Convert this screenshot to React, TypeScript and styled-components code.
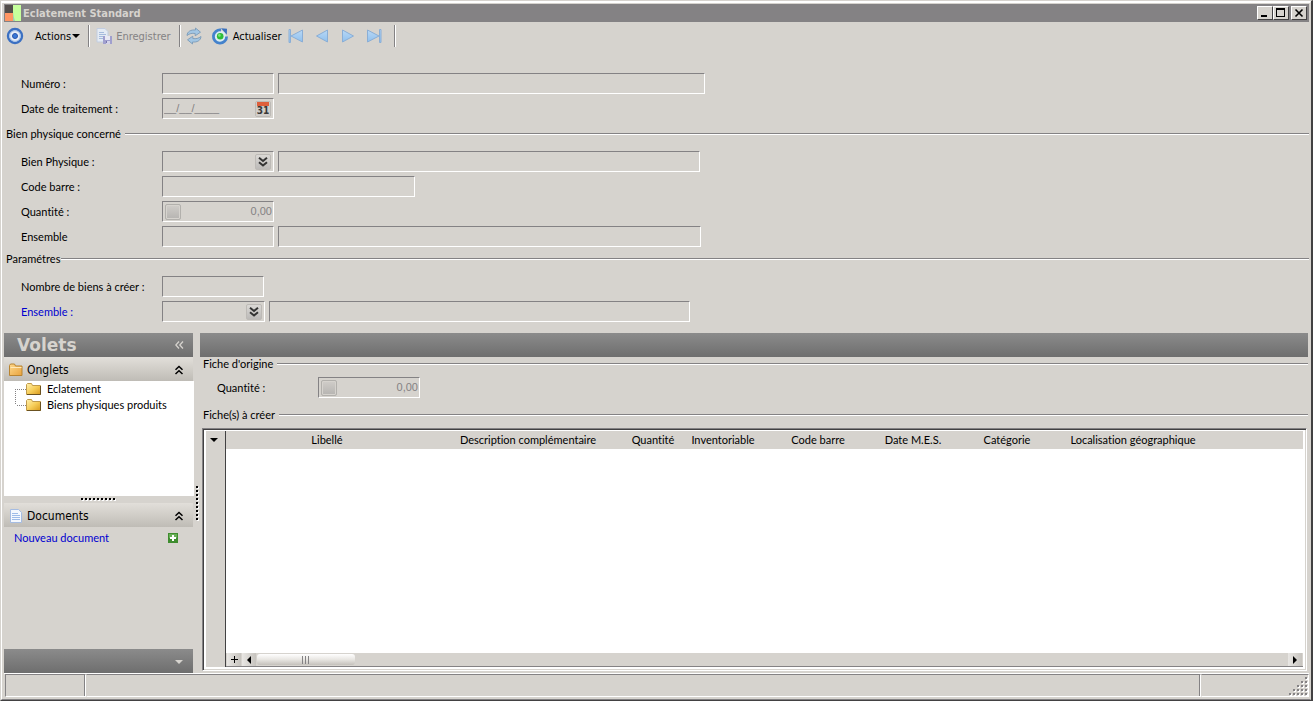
import React from "react";
import styled, { createGlobalStyle, css } from "styled-components";

const face = "#d6d3ce";
const shade = "#848284";
const dark = "#424142";

const GlobalStyle = createGlobalStyle`
  * { box-sizing: border-box; }
  html, body { margin: 0; padding: 0; }
  body, button, input, table {
    font-family: Lato, "Liberation Sans", Arial, sans-serif;
    font-size: 11px;
    font-variant-ligatures: none;
    line-height: 14px;
    color: #000;
  }
  button { margin: 0; padding: 0; border: 0; background: none; }
  a { text-decoration: none; color: #0000d0; }
  svg { display: block; flex: none; }
`;

const Frame = styled.div`
  min-height: 100vh;
  display: flex;
  background: ${face};
  border: 1px solid ${face};
  border-right: 2px solid ${dark};
  border-bottom: 1px solid ${dark};
`;

const Window = styled.div`
  flex: 1;
  min-width: 0;
  display: flex;
  flex-direction: column;
  border: 1px solid #fff;
  border-right-color: ${face};
  border-bottom-color: ${shade};
  border-top-width: 2px;
  padding: 1px 1px 1px 2px;
`;

const TitleBar = styled.header`
  display: flex;
  align-items: center;
  height: 18px;
  padding-right: 2px;
  background: ${shade};
`;

const Title = styled.h1`
  flex: 1;
  margin: 0 0 0 2px;
  padding-top: 1px;
  font: bold 11px/17px "DejaVu Sans Condensed", "DejaVu Sans", sans-serif;
  color: ${face};
`;

const CaptionButton = styled.button<{ $gap?: boolean }>`
  width: 16px;
  height: 14px;
  margin-left: ${(p) => (p.$gap ? 2 : 0)}px;
  display: grid;
  place-items: center;
  background: ${face};
  border: 1px solid;
  border-color: #fff ${dark} ${dark} #fff;
`;

const ToolBar = styled.nav`
  display: flex;
  align-items: center;
  height: 28px;
  padding-left: 2px;
`;

const ToolButton = styled.button<{ $left?: number; $gap?: number }>`
  display: flex;
  align-items: center;
  gap: ${(p) => p.$gap ?? 4}px;
  height: 22px;
  margin-left: ${(p) => p.$left ?? 0}px;
  font-family: "DejaVu Sans Condensed", "DejaVu Sans", sans-serif;
  font-size: 11px;
  &:disabled { color: ${shade}; }
`;

const ToolText = styled.span`
  padding-top: 2px;
`;

const ToolSeparator = styled.span<{ $left: number; $right?: number }>`
  width: 2px;
  height: 22px;
  margin: 0 ${(p) => p.$right ?? 0}px 0 ${(p) => p.$left}px;
  background: linear-gradient(90deg, ${shade} 50%, #fff 50%);
`;

const Form = styled.form`
  padding: 21px 0 9px;
`;

const Rows = styled.div<{ $space?: number }>`
  padding: 0 17px ${(p) => p.$space ?? 0}px;
`;

const Row = styled.div`
  display: flex;
  align-items: center;
  gap: 4px;
  height: 25px;
`;

const Label = styled.label<{ $width?: number }>`
  width: ${(p) => p.$width ?? 137}px;
  flex: none;
  white-space: nowrap;
`;

const BlueLabel = styled(Label)`
  color: #0000d0;
`;

const GroupTitle = styled.h2<{ $left?: number; $gap?: number; $space?: number }>`
  display: flex;
  align-items: center;
  gap: ${(p) => p.$gap ?? 4}px;
  height: 20px;
  margin: 0 0 ${(p) => p.$space ?? 0}px;
  padding-left: ${(p) => p.$left ?? 2}px;
  font-size: 11px;
  font-weight: normal;
  white-space: nowrap;
  &::after {
    content: "";
    flex: 1;
    height: 2px;
    background: linear-gradient(${shade} 50%, #fff 50%);
  }
`;

const sunken = css`
  border: 1px solid;
  border-color: ${shade} #fff #fff ${shade};
  background: ${face};
`;

const Field = styled.span<{ $width: number }>`
  ${sunken}
  display: flex;
  align-items: center;
  width: ${(p) => p.$width}px;
  height: 21px;
  flex: 0 1 auto;
`;

const Input = styled.input<{ $right?: boolean }>`
  flex: 1;
  min-width: 0;
  height: 19px;
  padding: 0 1px 2px;
  border: 0;
  outline: 0;
  background: transparent;
  color: ${shade};
  font-family: "Liberation Sans", Arial, sans-serif;
  text-align: ${(p) => (p.$right ? "right" : "left")};
`;

const FieldButton = styled.button<{ $lead?: boolean }>`
  display: grid;
  place-items: center;
  width: 16px;
  height: 16px;
  margin: ${(p) => (p.$lead ? "0 0 0 2px" : "0 2px 0 0")};
  border: 1px solid ${(p) => (p.$lead ? "#b2b0ac" : "#bdbab6")};
  border-radius: 2px;
  background: ${(p) => (p.$lead ? "linear-gradient(#d0cdc9, #b6b4b1)" : "linear-gradient(#dad8d5, #bcbab8)")};
  box-shadow: ${(p) => (p.$lead ? `inset 0 0 0 1px ${face}` : "none")};
`;

const Main = styled.main`
  flex: 1;
  display: grid;
  grid-template-columns: 190px 5px minmax(0, 1fr);
  padding-right: 1px;
`;

const bar = css`
  height: 24px;
  background: linear-gradient(#8b8b8b, #6e6e6e);
`;

const Side = styled.aside`
  display: flex;
  flex-direction: column;
`;

const SideHead = styled.div`
  ${bar}
  display: flex;
  align-items: center;
  justify-content: space-between;
  margin-right: 1px;
  padding: 0 9px 0 13px;
`;

const SideTitle = styled.h2`
  margin: 0;
  font: bold 17px/24px "DejaVu Sans", Verdana, sans-serif;
  color: ${face};
`;

const SectionHead = styled.button`
  display: flex;
  align-items: center;
  gap: 3px;
  height: 24px;
  margin-right: 1px;
  padding: 1px 9px 0 4px;
  background: linear-gradient(#e2dfda, #bfbcb6);
  font-family: "DejaVu Sans Condensed", "DejaVu Sans", sans-serif;
  font-size: 12px;
`;

const SectionName = styled.span`
  flex: 1;
  text-align: left;
`;

const Tree = styled.ul`
  height: 115px;
  margin: 0;
  padding: 0 0 0 11px;
  list-style: none;
  background: #fff;
`;

const TreeItem = styled.li<{ $last?: boolean }>`
  display: flex;
  align-items: center;
  gap: 5px;
  height: 16px;
  background:
    linear-gradient(#fff, #fff) 0 ${(p) => (p.$last ? 8 : -8)}px / 1px 16px no-repeat,
    repeating-linear-gradient(#848284 0 1px, #fff 1px 2px) 0 0 / 1px 16px no-repeat,
    repeating-linear-gradient(90deg, #848284 0 1px, #fff 1px 2px) 0 8px / 11px 1px no-repeat;
  padding-left: 11px;
`;

const TreeLink = styled.a`
  color: #000;
`;

const HorizontalGrip = styled.div`
  height: 7px;
  display: grid;
  place-items: center;
`;

const DocumentRow = styled.div`
  display: flex;
  justify-content: space-between;
  align-items: center;
  height: 22px;
  padding: 0 16px 0 10px;
`;

const SideFoot = styled.div`
  ${bar}
  display: flex;
  justify-content: flex-end;
  align-items: center;
  margin: auto 1px 0 0;
  padding: 2px 10px 0 0;
`;

const Splitter = styled.div`
  padding: 153px 0 0 2px;
`;

const Content = styled.section`
  display: flex;
  flex-direction: column;
  padding-left: 1px;
`;

const ContentBar = styled.div`
  ${bar}
`;

const QuantityRow = styled(Row)`
  height: 27px;
  padding-left: 17px;
  margin-bottom: 4px;
`;

const ContentGroup = styled.div`
  margin-top: -3px;
`;

const GridFrame = styled.div`
  flex: 1;
  display: flex;
  margin: 3px 1px 2px 2px;
  border: 1px solid;
  border-color: ${shade} #fff #fff ${shade};
  background: #fff;
  box-shadow: inset 1px 1px 0 ${dark}, inset -1px -1px 0 ${face};
  padding: 2px 3px 3px 3px;
`;

const MarkerColumn = styled.div`
  width: 20px;
  flex: none;
  background: ${face};
  border-right: 1px solid ${dark};
`;

const MarkerButton = styled.button`
  display: grid;
  place-items: center;
  width: 16px;
  height: 18px;
`;

const GridBody = styled.div`
  flex: 1;
  min-width: 0;
  display: flex;
  flex-direction: column;
  justify-content: space-between;
`;

const Table = styled.table`
  width: 100%;
  table-layout: fixed;
  border-collapse: collapse;
`;

const Th = styled.th<{ $width?: number }>`
  width: ${(p) => (p.$width ? p.$width + "px" : "auto")};
  height: 18px;
  padding: 0;
  background: ${face};
  font-weight: normal;
  white-space: nowrap;
`;

const ScrollBar = styled.div`
  display: flex;
  align-items: center;
  height: 14px;
  padding-left: 1px;
  background: ${face};
  border-bottom: 1px solid ${shade};
`;

const ScrollButton = styled.button`
  display: grid;
  place-items: center;
  width: 14px;
  height: 13px;
  margin-right: 1px;
  background: linear-gradient(90deg, #e9e7e4, #c6c3be);
`;

const Thumb = styled.div`
  display: grid;
  place-items: center;
  width: 98px;
  height: 11px;
  margin-right: auto;
  border-radius: 3px;
  background: linear-gradient(#fff, #e8e6e2 50%, #c4c1bb);
`;

const StatusBar = styled.footer`
  display: flex;
  height: 24px;
  margin-bottom: 1px;
  border-top: 1px solid #fff;
`;

const StatusCell = styled.div<{ $width?: number }>`
  ${sunken}
  flex: ${(p) => (p.$width ? `0 0 ${p.$width}px` : "1")};
  display: flex;
  align-items: flex-end;
  justify-content: flex-end;
  margin-left: 1px;
  & + & { margin-left: 0; border-left-color: ${face}; }
  &:not(:last-child) { box-shadow: inset -1px 0 0 ${shade}; }
`;

const AppLogo = () => (
  <svg width="17" height="16" viewBox="0 0 17 16">
    <path fill="#524d4a" d="M1 0h8v9H1z" />
    <path fill="#ff9563" d="M1 8h8v8H1z" />
    <path fill="#c6ff9c" d="M9 0h8v16H9z" />
    <path fill="#9ccfb5" d="M9 7q.5 5 2 9H9z" />
  </svg>
);

const TargetIcon = () => (
  <svg width="18" height="18" viewBox="0 0 18 18">
    <circle cx="9" cy="9" r="7" fill="#e7eef7" stroke="#3b70c2" strokeWidth="2.400" />
    <circle cx="9" cy="9" r="5.300" fill="none" stroke="#a9c3e8" />
    <circle cx="9" cy="9" r="2.500" fill="#3979d6" stroke="#2955ad" />
  </svg>
);

const SaveIcon = () => (
  <svg width="16" height="16" viewBox="0 0 16 16">
    <path d="M1 .5h8l3 3V14H1z" fill="#e4ebf4" stroke="#c2cde0" />
    <path d="M3 4.500h5M3 6.500h7M3 8.500h7M3 10.500h4" stroke="#a5bbdd" />
    <path d="M7 8h9v8H7z" fill="#a09fce" />
    <path d="M9 8h5v4H9z" fill="#e8e8f3" />
    <path d="M10 13h4v3h-4z" fill="#d4d3e8" />
    <path d="M10 13h1v2h-1z" fill="#7776ad" />
  </svg>
);

const SyncIcon = () => (
  <svg width="18" height="18" viewBox="0 0 18 18">
    <g fill="#a2c6e4" stroke="#7c9bb8" strokeWidth=".9" strokeLinejoin="round">
      <path d="M2 8.500C2.200 4.500 6 2.500 10.500 3V1l5 4.200-5.300 3.600V6.500C7 6 4.500 6.500 2 8.500z" />
      <path d="M16 9.500c-.2 4-4 6-8.500 5.500v2l-5-4.200 5.300-3.600v2.300c3.200.5 5.700 0 8.200-2z" />
    </g>
  </svg>
);

const RefreshIcon = () => (
  <svg width="18" height="18" viewBox="0 0 18 18">
    <circle cx="9" cy="9.500" r="6" fill="#dcecf0" />
    <path d="M10 3A6.600 6.600 0 1 0 15.600 9.500" fill="none" stroke="#4482cc" strokeWidth="2.800" />
    <path d="M10 1.200l6 .6-.2 6z" fill="#3970bd" />
    <circle cx="9.200" cy="9.300" r="3.300" fill="#2dbd37" />
    <circle cx="8.400" cy="8.400" r="1.300" fill="#80e27e" />
  </svg>
);

const NavIcon = ({ flip, bar }: { flip?: boolean; bar?: boolean }) => (
  <svg width="16" height="16" viewBox="0 0 16 16">
    <defs>
      <linearGradient id="nav" x1="0" y1="0" x2="0" y2="1">
        <stop offset="0" stopColor="#b9d8f5" />
        <stop offset="1" stopColor="#8fc0ee" />
      </linearGradient>
    </defs>
    <g transform={flip ? "matrix(-1 0 0 1 16 0)" : undefined} fill="url(#nav)" stroke="#8aaed6">
      <path d={bar ? "M1.500 2v12L13 8z" : "M2.500 2v12L13.500 8z"} />
      {bar && <path d="M13.500 1.500h1.500v13h-1.500z" />}
    </g>
  </svg>
);

const CaretDown = ({ color = "#000" }: { color?: string }) => (
  <svg width="8" height="4" viewBox="0 0 8 4">
    <path d="M0 0h8L4 4z" fill={color} />
  </svg>
);

const DoubleChevron = ({ up }: { up?: boolean }) => (
  <svg width="10" height="10" viewBox="0 0 10 10">
    <path
      d={up ? "M1.500 4.800L5 1.500l3.500 3.300M1.500 9L5 5.700 8.500 9" : "M1 .8l4 3.200L9 .8M1 5.300l4 3.200 4-3.200"}
      fill="none"
      stroke={up ? "#000" : "#333"}
      strokeWidth={up ? 1.500 : 2}
    />
  </svg>
);

const CollapseIcon = () => (
  <svg width="9" height="8" viewBox="0 0 9 8">
    <path d="M4 .5L.8 4 4 7.500M8 .5L4.800 4 8 7.500" fill="none" stroke={face} strokeWidth="1.300" />
  </svg>
);

const CalendarIcon = () => (
  <svg width="14" height="14" viewBox="0 0 14 14">
    <path d="M0 0h14v14H0z" fill="#d0cdc9" />
    <path d="M1 0h12v4H1z" fill="#de5f3c" />
    <text x="7" y="12" textAnchor="middle" fontFamily="DejaVu Sans Condensed, sans-serif" fontWeight="bold" fontSize="10" fill="#393839">31</text>
  </svg>
);

const FolderIcon = () => (
  <svg width="16" height="14" viewBox="0 0 16 14">
    <defs>
      <linearGradient id="folder" x1="0" y1="0" x2="1" y2="1">
        <stop offset="0" stopColor="#fff0ae" />
        <stop offset=".5" stopColor="#f7cf5c" />
        <stop offset="1" stopColor="#d99a1c" />
      </linearGradient>
    </defs>
    <path d="M.5 12.500v-10l1-1h4l1 2h8v9z" fill="url(#folder)" stroke="#c09a4a" />
    <path d="M14.500 4v8.500H1" fill="none" stroke="#6b5221" />
  </svg>
);

const PanelFolderIcon = () => (
  <svg width="16" height="14" viewBox="0 0 16 14">
    <defs>
      <linearGradient id="panelFolder" x1="0" y1="0" x2="1" y2="1">
        <stop offset="0" stopColor="#ffd98c" />
        <stop offset="1" stopColor="#e8a23c" />
      </linearGradient>
    </defs>
    <path d="M1.500 12.500v-10l1-1.500h4l1 2h6.500v9.500z" fill="url(#panelFolder)" stroke="#b98430" />
    <path d="M2.500 4.500h11" stroke="#ffe9b8" />
  </svg>
);

const PageIcon = () => (
  <svg width="16" height="16" viewBox="0 0 16 16">
    <path d="M2.500 1.500h8l3 3v10h-11z" fill="#f4f8fe" stroke="#a5bce2" />
    <path d="M4 5.500h6M4 7.500h8M4 9.500h8M4 11.500h8" stroke="#9dbbe8" />
  </svg>
);

const AddIcon = () => (
  <svg width="10" height="10" viewBox="0 0 10 10">
    <path d="M0 0h10v10H0z" fill="#3f8d2f" />
    <path d="M1 1h8v4H1z" fill="#67ad55" />
    <path d="M5 2v6M2 5h6" stroke="#fff" strokeWidth="2" />
  </svg>
);

const GripDots = ({ vertical }: { vertical?: boolean }) => (
  <svg width={vertical ? 3 : 36} height={vertical ? 36 : 3}>
    {Array.from({ length: 9 }, (_, i) => (
      <g key={i} transform={vertical ? `translate(0 ${i * 4})` : `translate(${i * 4} 0)`}>
        <path d="M1 1h2v2H1z" fill="#fff" />
        <path d="M0 0h2v2H0z" fill="#000" />
      </g>
    ))}
  </svg>
);

const SizeGrip = () => (
  <svg width="19" height="19" viewBox="0 0 19 19">
    {[0, 1, 2, 3, 4].flatMap((row) =>
      Array.from({ length: row + 1 }, (_, i) => (
        <g key={`${row}-${i}`} transform={`translate(${16 - i * 4} ${row * 4})`}>
          <path d="M1 1h2v2H1z" fill="#fff" />
          <path d="M0 0h2v2H0z" fill={shade} />
        </g>
      ))
    )}
  </svg>
);

const columns: [string, number?][] = [
  ["Libellé", 202],
  ["Description complémentaire", 200],
  ["Quantité", 50],
  ["Inventoriable", 90],
  ["Code barre", 100],
  ["Date M.E.S.", 90],
  ["Catégorie", 98],
  ["Localisation géographique", 154],
  [""],
];

const TextField = ({ id, width, name }: { id?: string; width: number; name?: string }) => (
  <Field $width={width}>
    <Input id={id} aria-label={name} readOnly />
  </Field>
);

const LookupField = ({ id, width }: { id: string; width: number }) => (
  <Field $width={width}>
    <Input id={id} readOnly />
    <FieldButton type="button" aria-label="Rechercher">
      <DoubleChevron />
    </FieldButton>
  </Field>
);

const NumberField = ({ id, width }: { id: string; width: number }) => (
  <Field $width={width}>
    <FieldButton type="button" $lead aria-label="Calculer" />
    <Input id={id} $right defaultValue="0,00" />
  </Field>
);

export default function App() {
  return (
    <>
      <GlobalStyle />
      <Frame>
        <Window>
          <TitleBar>
            <AppLogo />
            <Title>Eclatement Standard</Title>
            <CaptionButton aria-label="Réduire">
              <svg width="12" height="10"><path d="M2 7h6v2H2z" /></svg>
            </CaptionButton>
            <CaptionButton aria-label="Agrandir">
              <svg width="12" height="10"><path d="M1 0h9v9H1zM2 2v6h7V2z" fillRule="evenodd" /></svg>
            </CaptionButton>
            <CaptionButton $gap aria-label="Fermer">
              <svg width="12" height="10"><path d="M2.500 1.500l7 7M9.500 1.500l-7 7" stroke="#000" strokeWidth="1.600" /></svg>
            </CaptionButton>
          </TitleBar>

          <ToolBar>
            <ToolButton aria-label="Cible"><TargetIcon /></ToolButton>
            <ToolButton $left={11} $gap={1}><ToolText>Actions</ToolText><CaretDown /></ToolButton>
            <ToolSeparator $left={8} $right={6} />
            <ToolButton disabled><SaveIcon /><ToolText>Enregistrer</ToolText></ToolButton>
            <ToolSeparator $left={8} $right={4} />
            <ToolButton aria-label="Synchroniser"><SyncIcon /></ToolButton>
            <ToolButton $left={8}><RefreshIcon /><ToolText>Actualiser</ToolText></ToolButton>
            <ToolButton $left={6} aria-label="Premier"><NavIcon flip bar /></ToolButton>
            <ToolButton $left={10} aria-label="Précédent"><NavIcon flip /></ToolButton>
            <ToolButton $left={10} aria-label="Suivant"><NavIcon /></ToolButton>
            <ToolButton $left={10} aria-label="Dernier"><NavIcon bar /></ToolButton>
            <ToolSeparator $left={12} />
          </ToolBar>

          <Form>
            <Rows $space={3}>
              <Row>
                <Label htmlFor="numero">Numéro :</Label>
                <TextField id="numero" width={112} />
                <TextField name="Libellé du numéro" width={427} />
              </Row>
              <Row>
                <Label htmlFor="date">Date de traitement :</Label>
                <Field $width={112}>
                  <Input id="date" defaultValue="__/__/____" />
                  <FieldButton type="button" aria-label="Calendrier"><CalendarIcon /></FieldButton>
                </Field>
              </Row>
            </Rows>

            <GroupTitle $space={5}>Bien physique concerné</GroupTitle>
            <Rows>
              <Row>
                <Label htmlFor="bien">Bien Physique :</Label>
                <LookupField id="bien" width={112} />
                <TextField name="Libellé du bien" width={422} />
              </Row>
              <Row>
                <Label htmlFor="code">Code barre :</Label>
                <TextField id="code" width={253} />
              </Row>
              <Row>
                <Label htmlFor="quantite">Quantité :</Label>
                <NumberField id="quantite" width={112} />
              </Row>
              <Row>
                <Label htmlFor="ensemble">Ensemble</Label>
                <TextField id="ensemble" width={112} />
                <TextField name="Libellé de l'ensemble" width={423} />
              </Row>
            </Rows>

            <GroupTitle $gap={1} $space={5}>Paramétres</GroupTitle>
            <Rows>
              <Row>
                <Label htmlFor="nombre">Nombre de biens à créer :</Label>
                <TextField id="nombre" width={102} />
              </Row>
              <Row>
                <BlueLabel htmlFor="cible">Ensemble :</BlueLabel>
                <LookupField id="cible" width={103} />
                <TextField name="Libellé de l'ensemble cible" width={421} />
              </Row>
            </Rows>
          </Form>

          <Main>
            <Side>
              <SideHead>
                <SideTitle>Volets</SideTitle>
                <button aria-label="Replier"><CollapseIcon /></button>
              </SideHead>
              <SectionHead>
                <PanelFolderIcon />
                <SectionName>Onglets</SectionName>
                <DoubleChevron up />
              </SectionHead>
              <Tree>
                <TreeItem><FolderIcon /><TreeLink href="#eclatement">Eclatement</TreeLink></TreeItem>
                <TreeItem $last><FolderIcon /><TreeLink href="#biens">Biens physiques produits</TreeLink></TreeItem>
              </Tree>
              <HorizontalGrip><GripDots /></HorizontalGrip>
              <SectionHead>
                <PageIcon />
                <SectionName>Documents</SectionName>
                <DoubleChevron up />
              </SectionHead>
              <DocumentRow>
                <a href="#nouveau">Nouveau document</a>
                <button aria-label="Ajouter"><AddIcon /></button>
              </DocumentRow>
              <SideFoot><CaretDown color={face} /></SideFoot>
            </Side>

            <Splitter><GripDots vertical /></Splitter>

            <Content>
              <ContentBar />
              <ContentGroup>
                <GroupTitle $left={3}>Fiche d'origine</GroupTitle>
                <QuantityRow>
                  <Label $width={97} htmlFor="origine">Quantité :</Label>
                  <NumberField id="origine" width={102} />
                </QuantityRow>
                <GroupTitle $left={3}>Fiche(s) à créer</GroupTitle>
              </ContentGroup>
              <GridFrame>
                <MarkerColumn>
                  <MarkerButton aria-label="Menu de la grille"><CaretDown /></MarkerButton>
                </MarkerColumn>
                <GridBody>
                  <Table>
                    <thead>
                      <tr>
                        {columns.map(([name, width]) => (
                          <Th key={name} $width={width} scope="col">{name}</Th>
                        ))}
                      </tr>
                    </thead>
                  </Table>
                  <ScrollBar>
                    <ScrollButton aria-label="Ajouter une ligne">
                      <svg width="7" height="7"><path d="M3 0h1v3h3v1H4v3H3V4H0V3h3z" /></svg>
                    </ScrollButton>
                    <ScrollButton aria-label="Défiler à gauche">
                      <svg width="4" height="8"><path d="M4 0v8L0 4z" /></svg>
                    </ScrollButton>
                    <Thumb>
                      <svg width="8" height="8"><path d="M.5 0v8M3.500 0v8M6.500 0v8" stroke="#848284" /></svg>
                    </Thumb>
                    <ScrollButton aria-label="Défiler à droite">
                      <svg width="4" height="8"><path d="M0 0v8l4-4z" /></svg>
                    </ScrollButton>
                  </ScrollBar>
                </GridBody>
              </GridFrame>
            </Content>
          </Main>

          <StatusBar>
            <StatusCell $width={81} />
            <StatusCell />
            <StatusCell $width={108}><SizeGrip /></StatusCell>
          </StatusBar>
        </Window>
      </Frame>
    </>
  );
}
